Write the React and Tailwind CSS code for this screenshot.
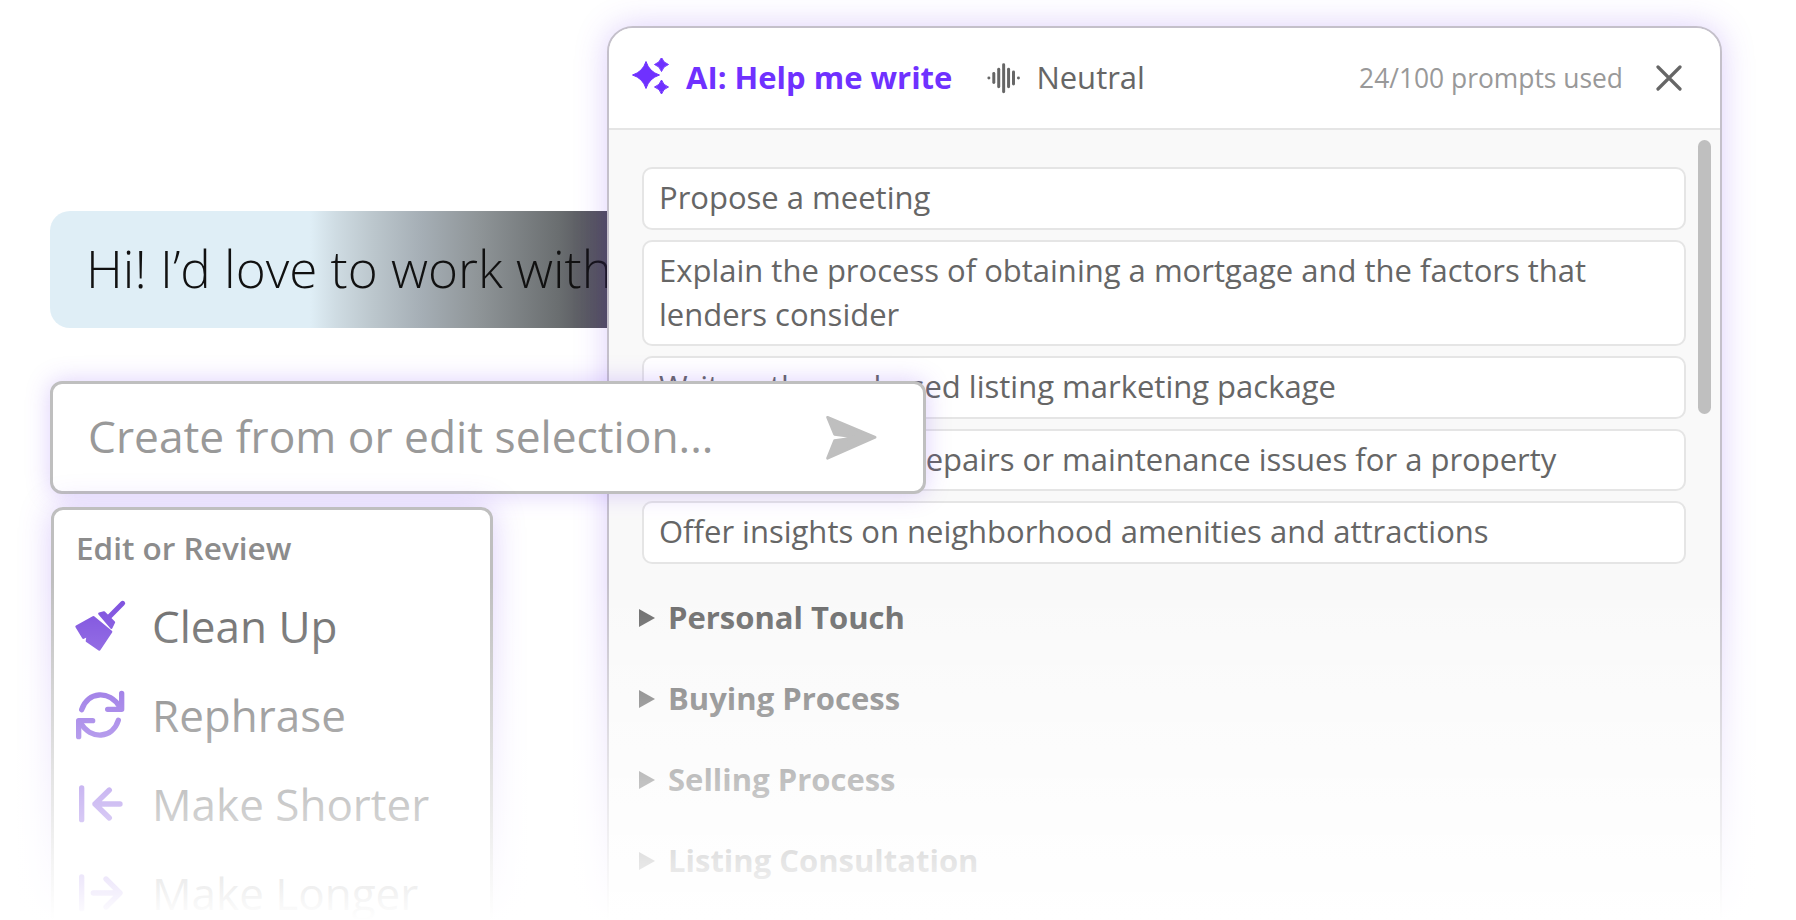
const PURPLE = "#7747dd";

function Star({ cx, cy, r }) {
  const k = r * 0.24;
  return (
    <path
      d={`M${cx} ${cy - r}Q${cx + k} ${cy - k} ${cx + r} ${cy}Q${cx + k} ${cy + k} ${cx} ${cy + r}Q${cx - k} ${cy + k} ${cx - r} ${cy}Q${cx - k} ${cy - k} ${cx} ${cy - r}Z`}
      fill="#6f31ff"
      stroke="#6f31ff"
      strokeWidth="1"
      strokeLinejoin="round"
    />
  );
}

function Sparkle() {
  return (
    <svg viewBox="630 60 40 40" className="w-[40px] h-[40px] shrink-0">
      <Star cx={646} cy={77} r={13.5} />
      <Star cx={661.5} cy={66.5} r={7} />
      <Star cx={661.5} cy={89} r={7} />
    </svg>
  );
}

function Wave() {
  const bars = [
    [1016, 203, 203],
    [1030, 190, 216],
    [1044, 178, 228],
    [1058, 165, 242],
    [1072, 178, 228],
    [1086, 186, 220],
    [1100, 203, 203],
  ];
  return (
    <svg viewBox="1005 155 108 96" className="w-[38px] h-[34px] shrink-0">
      {bars.map(([x, a, b]) => (
        <line key={x} x1={x} x2={x} y1={a} y2={b} stroke="#666" strokeWidth="8.5" strokeLinecap="round" />
      ))}
    </svg>
  );
}

function Close() {
  return (
    <svg viewBox="0 0 26 26" className="w-[26px] h-[26px] shrink-0">
      <path d="M2 2L24 24M24 2L2 24" stroke="#666" strokeWidth="3.2" strokeLinecap="round" fill="none" />
    </svg>
  );
}

function Send() {
  return (
    <svg viewBox="250 222 164 144" className="w-[55px] h-[48px] shrink-0">
      <path
        d="M260 232L403 292L260 355L281 302L350 292L281 283Z"
        fill="#bfbfbf"
        stroke="#bfbfbf"
        strokeWidth="8"
        strokeLinejoin="round"
      />
    </svg>
  );
}

function Broom() {
  return (
    <svg viewBox="38 29 168 168" className="w-[56px] h-[56px] shrink-0">
      <path d="M190 45L150 85" stroke={PURPLE} strokeWidth="15" strokeLinecap="round" fill="none" />
      <path d="M120 76L134 72L164 102L156 118Z" fill={PURPLE} stroke={PURPLE} strokeWidth="7" strokeLinejoin="round" />
      <path
        d="M52 115L102 87L155 130L120 183L83 158L86 141L72 148Z"
        fill={PURPLE}
        stroke={PURPLE}
        strokeWidth="8"
        strokeLinejoin="round"
      />
    </svg>
  );
}

function Refresh() {
  return (
    <svg viewBox="38 297 168 168" className="w-[56px] h-[56px] shrink-0" fill="none" stroke={PURPLE} strokeWidth="16" strokeLinecap="round" strokeLinejoin="round">
      <path d="M67 365C85 310 150 305 182 358" />
      <path d="M187 316V364H145" />
      <path d="M177 397C160 452 95 457 63 404" />
      <path d="M58 446V398H100" />
    </svg>
  );
}

function Shorter() {
  return (
    <svg viewBox="126 834 168 168" className="w-[56px] h-[56px] shrink-0" fill="none" stroke={PURPLE} strokeWidth="16" strokeLinecap="round" strokeLinejoin="round">
      <path d="M155 870V965" />
      <path d="M270 918H195M238 876L195 918L238 960" />
    </svg>
  );
}

function Longer() {
  return (
    <svg viewBox="126 1104 168 168" className="w-[56px] h-[56px] shrink-0" fill="none" stroke={PURPLE} strokeWidth="16" strokeLinecap="round" strokeLinejoin="round">
      <path d="M155 1140V1235" />
      <path d="M190 1188H268M228 1146L270 1188L228 1230" />
    </svg>
  );
}

function Tri() {
  return (
    <svg viewBox="0 0 16 18" className="w-[16px] h-[18px] shrink-0">
      <path d="M0 0L16 9L0 18Z" fill="#666" />
    </svg>
  );
}

const prompts = [
  "Propose a meeting",
  "Explain the process of obtaining a mortgage and the factors that lenders consider",
  "Write a theme-based listing marketing package",
  "Identify potential repairs or maintenance issues for a property",
  "Offer insights on neighborhood amenities and attractions",
];

const groups = ["Personal Touch", "Buying Process", "Selling Process", "Listing Consultation"];

const actions = [
  ["Clean Up", Broom],
  ["Rephrase", Refresh],
  ["Make Shorter", Shorter],
  ["Make Longer", Longer],
];

export default function App() {
  return (
    <div className="relative w-[1796px] h-[920px] overflow-hidden bg-white font-['Open_Sans',sans-serif]">
      {/* Message bubble */}
      <div className="absolute left-[50px] top-[211px] w-[620px] h-[117px] rounded-l-[20px] overflow-hidden flex items-center pl-[36px] pb-[2px] bg-[linear-gradient(90deg,#dfeef6_0%,#dfeef6_42%,#cfdce3_46%,#bcc7cd_52%,#a5aeb5_60%,#8f9598_69%,#6a6e70_82%,#4c4a55_90%,#4c4a55_100%)]">
        <span className="text-[51.2px] font-light text-[#111] whitespace-nowrap leading-none">Hi! I’d love to work with</span>
      </div>

      {/* AI panel */}
      <div className="absolute left-[607px] top-[26px] w-[1115px] h-[940px] rounded-[26px] border-2 border-[#c4c0ca] bg-[#f9f9f9] shadow-[0_0_32px_rgba(124,70,240,0.26)] overflow-hidden">
        <div className="h-[102px] bg-white border-b-2 border-[#e5e5e5] flex items-center pl-[21px] pr-[38px]">
          <Sparkle />
          <span className="ml-[16px] -mt-[2px] text-[31px] font-bold text-[#6f31ff] whitespace-nowrap">AI: Help me write</span>
          <span className="ml-[33px]"><Wave /></span>
          <span className="ml-[13px] -mt-[2px] text-[31px] text-[#666] whitespace-nowrap">Neutral</span>
          <span className="ml-auto mt-[1px] text-[26.4px] text-[#999] whitespace-nowrap">24/100 prompts used</span>
          <span className="ml-[33px]"><Close /></span>
        </div>
        <div className="relative pt-[37px] pl-[33px] pr-[34px]">
          <div className="absolute right-[9px] top-[10px] w-[13px] h-[274px] rounded-full bg-[#bfbfbf]" />
          <div className="flex flex-col gap-[10px]">
            {prompts.map((p) => (
              <div key={p} className="bg-white border-2 border-[#e5e5e5] rounded-[10px] pl-[15px] pr-[16px] pt-[6px] pb-[8.5px] text-[31px] leading-[44px] text-[#666]">
                {p}
              </div>
            ))}
          </div>
          <div className="mt-[13.5px] flex flex-col">
            {groups.map((g) => (
              <div key={g} className="h-[81px] flex items-center gap-[13px] -ml-[3px]">
                <Tri />
                <span className="text-[31px] font-bold text-[#666] whitespace-nowrap">{g}</span>
              </div>
            ))}
          </div>
        </div>
      </div>

      {/* Prompt input */}
      <div className="absolute left-[50px] top-[381px] w-[876px] h-[113px] rounded-[12px] border-[3px] border-[#bfbfbf] bg-white shadow-[0_0_24px_rgba(124,70,240,0.26)] flex items-center pl-[35px] pr-[44px]">
        <span className="text-[44.3px] text-[#999] whitespace-nowrap pb-[2px]">Create from or edit selection...</span>
        <span className="ml-auto"><Send /></span>
      </div>

      {/* Actions menu */}
      <div className="absolute left-[51px] top-[507px] w-[442px] h-[460px] rounded-[12px] border-[3px] border-[#bfbfbf] bg-white shadow-[0_0_32px_rgba(124,70,240,0.26)] pl-[18px]">
        <div className="pt-[16px] pl-[4px] h-[71px] text-[31.5px] font-semibold text-[#8c8c8c] leading-[44px] whitespace-nowrap">Edit or Review</div>
        <div className="flex flex-col">
          {actions.map(([label, Icon]) => (
            <div key={label} className="h-[89px] flex items-center gap-[24px]">
              <Icon />
              <span className="text-[44px] text-[#666] whitespace-nowrap">{label}</span>
            </div>
          ))}
        </div>
      </div>

      {/* Fade to white */}
      <div className="absolute inset-x-0 bottom-0 h-[340px] bg-gradient-to-b from-white/0 to-white pointer-events-none" />
    </div>
  );
}
